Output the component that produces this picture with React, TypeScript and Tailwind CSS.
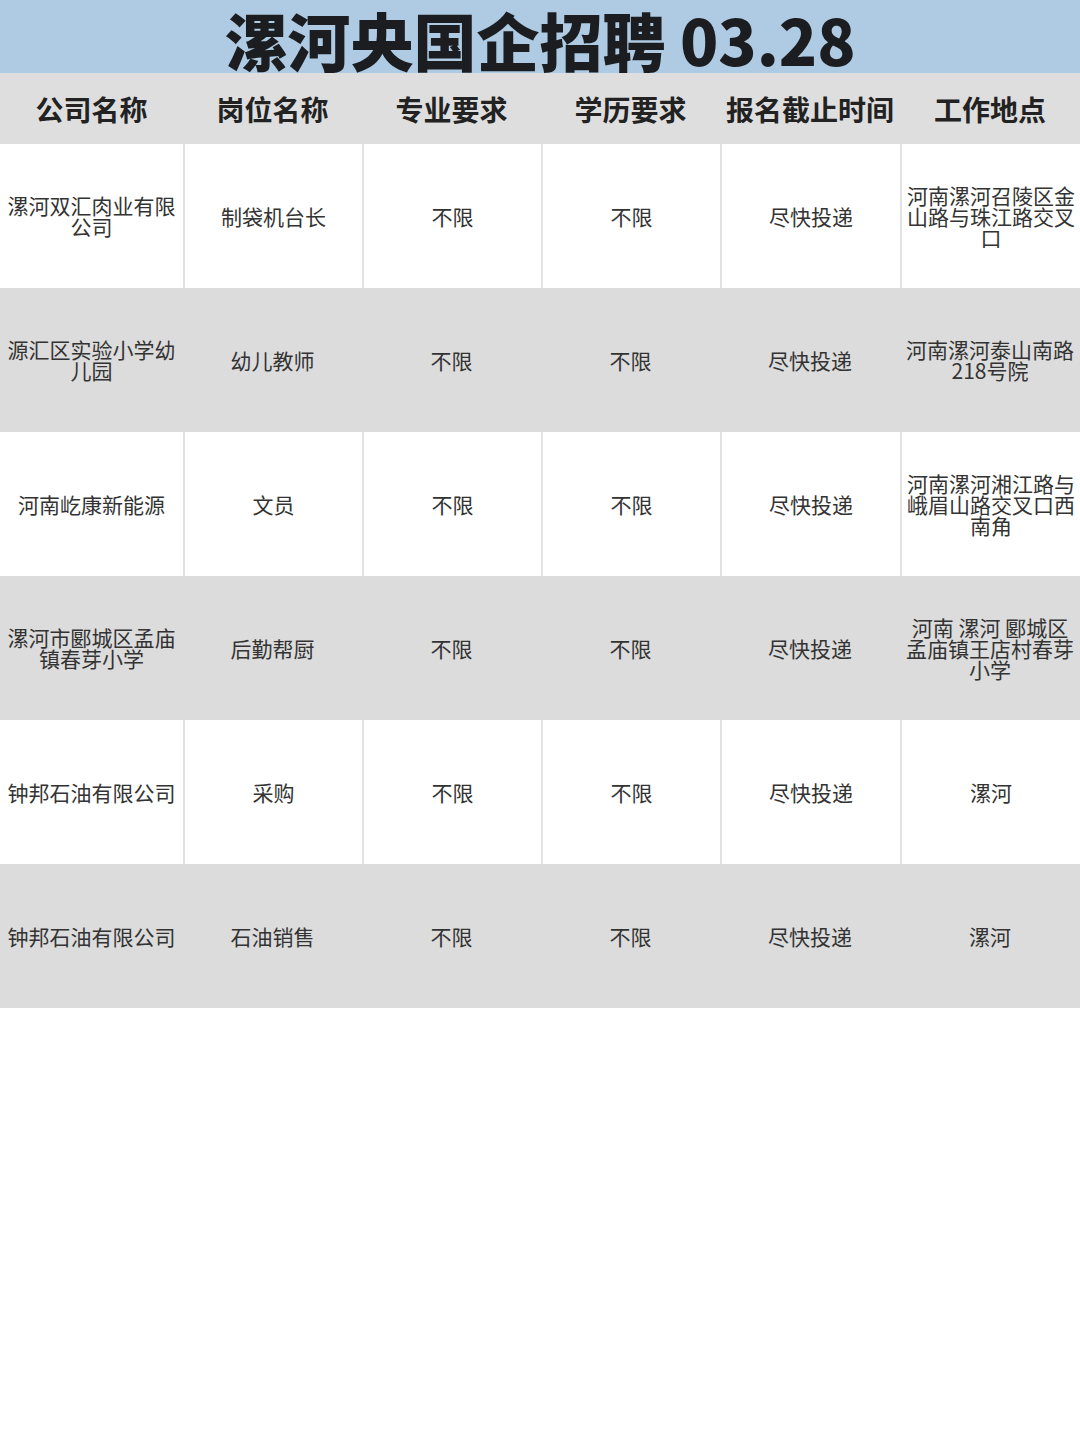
const cols = ["公司名称", "岗位名称", "专业要求", "学历要求", "报名截止时间", "工作地点"];

const rows: string[][] = [
  ["漯河双汇肉业有限公司", "制袋机台长", "不限", "不限", "尽快投递", "河南漯河召陵区金山路与珠江路交叉口"],
  ["源汇区实验小学幼儿园", "幼儿教师", "不限", "不限", "尽快投递", "河南漯河泰山南路218号院"],
  ["河南屹康新能源", "文员", "不限", "不限", "尽快投递", "河南漯河湘江路与峨眉山路交叉口西南角"],
  ["漯河市郾城区孟庙镇春芽小学", "后勤帮厨", "不限", "不限", "尽快投递", "河南 漯河 郾城区 孟庙镇王店村春芽小学"],
  ["钟邦石油有限公司", "采购", "不限", "不限", "尽快投递", "漯河"],
  ["钟邦石油有限公司", "石油销售", "不限", "不限", "尽快投递", "漯河"],
];

const grid = "grid grid-cols-[183px_179px_179px_179px_180px_180px]";

export default function App() {
  return (
    <div className="w-[1080px] min-h-[1444px] bg-white font-['Noto_Sans_CJK_SC','Noto_Sans',sans-serif]">
      <div className="flex h-[73px] items-center justify-center bg-[#aecbe3] pt-[4px]">
        <h1 className="text-[63px] font-black leading-[66px] text-[#1b1d20]">漯河央国企招聘 03.28</h1>
      </div>
      <div className={`${grid} h-[71px] bg-[#dedede]`}>
        {cols.map((c) => (
          <div key={c} className="flex items-center justify-center text-[28px] font-bold text-[#222]">
            {c}
          </div>
        ))}
      </div>
      {rows.map((r, i) => {
        const gray = i % 2 === 1;
        return (
          <div key={i} className={`${grid} h-[144px] ${gray ? "bg-[#dcdcdc]" : "bg-white"}`}>
            {r.map((t, j) => (
              <div
                key={j}
                className={`flex items-center justify-center px-[5px] text-center text-[21px] leading-[21px] text-[#333] ${
                  !gray && j > 0 ? "border-l-2 border-[#e2e2e2]" : ""
                }`}
              >
                {t}
              </div>
            ))}
          </div>
        );
      })}
    </div>
  );
}
